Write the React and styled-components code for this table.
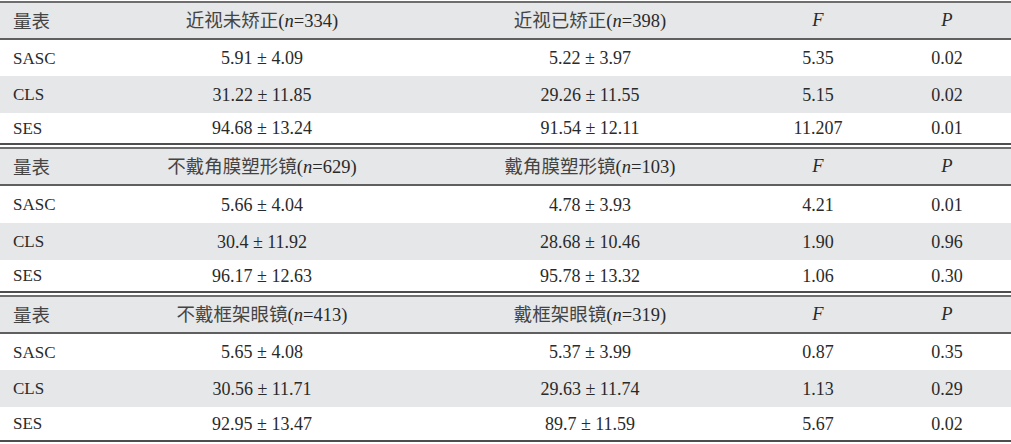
import styled, { createGlobalStyle } from "styled-components";

const GlobalStyle = createGlobalStyle`
  body {
    margin: 0;
    background: #fff;
    font-family: "Liberation Serif", "Noto Sans CJK SC", serif;
  }
`;

const Wrap = styled.div`
  width: 1011px;
  padding-top: 1px;
  display: flex;
  flex-direction: column;
  gap: 2px;
`;

const Section = styled.div`
  border-top: 2px solid #6e6e6e;
  border-bottom: 2px solid #4e4e4e;
`;

const Row = styled.div`
  display: grid;
  grid-template-columns: 97px 330px 326px 130px 1fr;
  height: ${(p) => p.h}px;
  align-items: center;
  line-height: 1;
  background: ${(p) => (p.shade ? "#e6e7e8" : "#fff")};
  border-bottom: ${(p) => (p.head ? "2px solid #5f5f5f" : "none")};
  font-size: ${(p) => (p.head ? "18.5px" : "18px")};
  color: #2a2a2a;
`;

const Cell = styled.div`
  text-align: ${(p) => (p.left ? "left" : "center")};
  padding-left: ${(p) => (p.left ? "13px" : "0")};
  font-size: ${(p) => (p.left ? "17px" : "inherit")};
  white-space: nowrap;
`;

const Cjk = styled.span`
  font-family: "Noto Sans CJK SC", sans-serif;
  font-size: 18.5px;
  color: #444;
`;

const I = styled.i`
  font-style: italic;
`;

const sections = [
  {
    a: ["近视未矫正", "334"],
    b: ["近视已矫正", "398"],
    rows: [
      ["SASC", "5.91 ± 4.09", "5.22 ± 3.97", "5.35", "0.02"],
      ["CLS", "31.22 ± 11.85", "29.26 ± 11.55", "5.15", "0.02"],
      ["SES", "94.68 ± 13.24", "91.54 ± 12.11", "11.207", "0.01"],
    ],
    heights: [35, 36, 37, 30],
  },
  {
    a: ["不戴角膜塑形镜", "629"],
    b: ["戴角膜塑形镜", "103"],
    rows: [
      ["SASC", "5.66 ± 4.04", "4.78 ± 3.93", "4.21", "0.01"],
      ["CLS", "30.4 ± 11.92", "28.68 ± 10.46", "1.90", "0.96"],
      ["SES", "96.17 ± 12.63", "95.78 ± 13.32", "1.06", "0.30"],
    ],
    heights: [35, 37, 37, 31],
  },
  {
    a: ["不戴框架眼镜", "413"],
    b: ["戴框架眼镜", "319"],
    rows: [
      ["SASC", "5.65 ± 4.08", "5.37 ± 3.99", "0.87", "0.35"],
      ["CLS", "30.56 ± 11.71", "29.63 ± 11.74", "1.13", "0.29"],
      ["SES", "92.95 ± 13.47", "89.7 ± 11.59", "5.67", "0.02"],
    ],
    heights: [35, 36, 37, 33],
  },
];

function Group(label) {
  return (
    <>
      <Cjk>{label[0]}</Cjk>(<I>n</I>={label[1]})
    </>
  );
}

export default function App() {
  return (
    <>
      <GlobalStyle />
      <Wrap>
        {sections.map((s, si) => (
          <Section key={si}>
            <Row head shade h={s.heights[0]}>
              <Cell left>
                <Cjk>量表</Cjk>
              </Cell>
              <Cell>{Group(s.a)}</Cell>
              <Cell>{Group(s.b)}</Cell>
              <Cell>
                <I>F</I>
              </Cell>
              <Cell>
                <I>P</I>
              </Cell>
            </Row>
            {s.rows.map((r, ri) => (
              <Row key={ri} shade={ri === 1} h={s.heights[ri + 1]}>
                <Cell left>{r[0]}</Cell>
                <Cell>{r[1]}</Cell>
                <Cell>{r[2]}</Cell>
                <Cell>{r[3]}</Cell>
                <Cell>{r[4]}</Cell>
              </Row>
            ))}
          </Section>
        ))}
      </Wrap>
    </>
  );
}
